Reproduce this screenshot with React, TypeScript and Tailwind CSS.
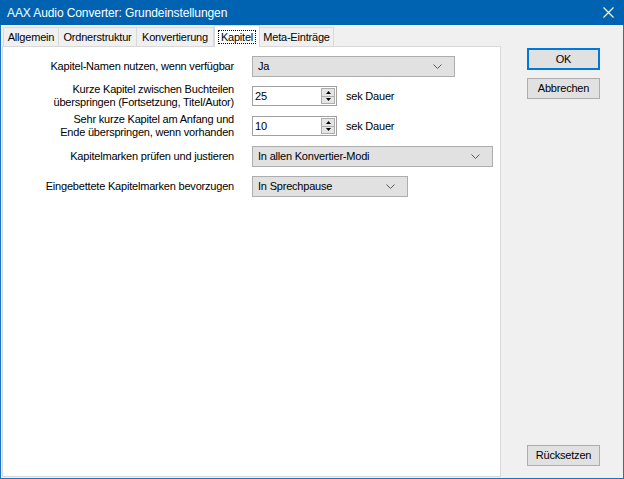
import { ReactNode } from "react";

const ui = { fontFamily: '"Liberation Sans", Arial, sans-serif' };

function Chevron() {
  return (
    <svg width="9" height="5" viewBox="0 0 9 5" className="shrink-0">
      <path d="M0.5 0.5 L4.5 4.5 L8.5 0.5" fill="none" stroke="#5a5a5a" strokeWidth="1" />
    </svg>
  );
}

function Combo({ value, width }: { value: string; width: string }) {
  return (
    <div
      className={`${width} h-[21px] flex items-center justify-between pl-[5px] pr-[12px] bg-[#e1e1e1] border border-[#adadad] text-[11px] tracking-[-0.2px] text-black`}
    >
      <span>{value}</span>
      <Chevron />
    </div>
  );
}

function Spinner({ value }: { value: string }) {
  return (
    <div className="w-[85px] h-[20px] flex items-stretch bg-white border border-[#a0a0a0]">
      <span className="flex-1 pl-[2px] text-[11px] leading-[18px] text-black">{value}</span>
      <div className="w-[14px] flex flex-col my-[1px] mr-[1px]">
        <div className="flex-1 flex items-center justify-center bg-[#e5e5e5] border border-[#adadad]">
          <svg width="5" height="3" viewBox="0 0 5 3">
            <path d="M0 3 L2.5 0 L5 3 Z" fill="#000" />
          </svg>
        </div>
        <div className="flex-1 flex items-center justify-center bg-[#e5e5e5] border border-t-0 border-[#adadad]">
          <svg width="5" height="3" viewBox="0 0 5 3">
            <path d="M0 0 L2.5 3 L5 0 Z" fill="#000" />
          </svg>
        </div>
      </div>
    </div>
  );
}

function Row({ label, children }: { label: ReactNode; children: ReactNode }) {
  return (
    <div className="h-[30px] flex items-center">
      <div className="w-[231px] text-right text-[11px] leading-[13px] tracking-[-0.2px] text-black">{label}</div>
      <div className="ml-[18px] flex items-center gap-[9px]">{children}</div>
    </div>
  );
}

function Button({ label, primary }: { label: string; primary?: boolean }) {
  return (
    <div
      className={`w-[73px] flex items-center justify-center bg-[#e1e1e1] text-[11px] tracking-[-0.2px] text-black ${
        primary ? "h-[22px] border-2 border-[#0078d7]" : "h-[21px] border border-[#adadad]"
      }`}
    >
      {label}
    </div>
  );
}

const tabs = [
  { name: "Allgemein", w: "w-[56px]" },
  { name: "Ordnerstruktur", w: "w-[79px]" },
  { name: "Konvertierung", w: "w-[78px]" },
  { name: "Kapitel", w: "w-[46px]", active: true },
  { name: "Meta-Einträge", w: "w-[75px]" },
];

export default function App() {
  return (
    <div className="w-[624px] h-[479px] flex flex-col bg-[#f0f0f0] border border-t-0 border-[#1c73c4]" style={ui}>
      <div className="h-[25px] -mx-[1px] bg-[#0063b1] flex items-center justify-between pl-[7px] pr-[10px]">
        <span className="text-white text-[12px] tracking-[-0.1px]">AAX Audio Converter: Grundeinstellungen</span>
        <svg width="11" height="11" viewBox="0 0 11 11">
          <path d="M0.5 0.5 L10.5 10.5 M10.5 0.5 L0.5 10.5" stroke="#fff" strokeWidth="1.1" />
        </svg>
      </div>

      <div className="flex-1 flex">
        <div className="w-[499px] ml-[1px] flex flex-col pb-[1px]">
          <div className="h-[21px] flex items-end pl-[1px]">
            {tabs.map((t) =>
              t.active ? (
                <div
                  key={t.name}
                  className={`${t.w} h-[22px] -mb-[1px] z-10 flex items-center justify-center bg-white border border-b-0 border-[#d9d9d9] text-[11px] tracking-[-0.2px] text-black`}
                >
                  <span className="px-[2px] border border-dotted border-black leading-[12px]">{t.name}</span>
                </div>
              ) : (
                <div
                  key={t.name}
                  className={`${t.w} h-[19px] flex items-center justify-center bg-[#f0f0f0] border border-b-0 border-[#d9d9d9] -ml-[1px] first:ml-0 text-[11px] tracking-[-0.2px] text-black`}
                >
                  {t.name}
                </div>
              )
            )}
          </div>
          <div className="flex-1 bg-white border border-[#d9d9d9] pt-[4px]">
            <Row label="Kapitel-Namen nutzen, wenn verfügbar">
              <Combo value="Ja" width="w-[203px]" />
            </Row>
            <Row
              label={
                <>
                  Kurze Kapitel zwischen Buchteilen
                  <br />
                  überspringen (Fortsetzung, Titel/Autor)
                </>
              }
            >
              <Spinner value="25" />
              <span className="text-[11px] tracking-[-0.2px] text-black">sek Dauer</span>
            </Row>
            <Row
              label={
                <>
                  Sehr kurze Kapitel am Anfang und
                  <br />
                  Ende überspringen, wenn vorhanden
                </>
              }
            >
              <Spinner value="10" />
              <span className="text-[11px] tracking-[-0.2px] text-black">sek Dauer</span>
            </Row>
            <Row label="Kapitelmarken prüfen und justieren">
              <Combo value="In allen Konvertier-Modi" width="w-[241px]" />
            </Row>
            <Row label="Eingebettete Kapitelmarken bevorzugen">
              <Combo value="In Sprechpause" width="w-[156px]" />
            </Row>
          </div>
        </div>

        <div className="flex-1 flex flex-col pl-[26px] pt-[23px] pb-[12px]">
          <Button label="OK" primary />
          <div className="mt-[8px]">
            <Button label="Abbrechen" />
          </div>
          <div className="mt-auto">
            <Button label="Rücksetzen" />
          </div>
        </div>
      </div>
    </div>
  );
}
